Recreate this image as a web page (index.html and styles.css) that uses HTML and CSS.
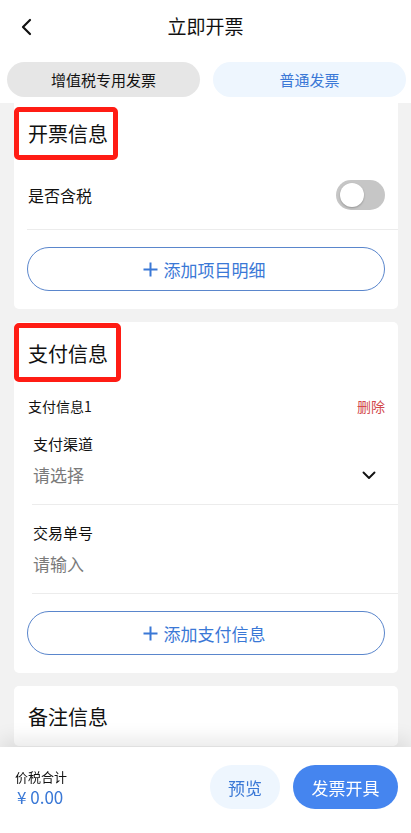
FILE: index.html
```html
<!DOCTYPE html>
<html lang="zh-CN">
<head>
<meta charset="utf-8">
<meta name="viewport" content="width=device-width, initial-scale=1">
<title>立即开票</title>
<link rel="stylesheet" href="styles.css">
</head>
<body>
<div class="page">
  <header class="topbar">
    <span class="back">
      <svg width="14" height="18" viewBox="0 0 14 18"><polyline points="10,2 3,9 10,16" fill="none" stroke="#111" stroke-width="2.2" stroke-linecap="round" stroke-linejoin="round"/></svg>
    </span>
    <h1 class="title">立即开票</h1>
  </header>
  <div class="tabs">
    <div class="tab tab-grey">增值税专用发票</div>
    <div class="tab tab-blue">普通发票</div>
  </div>

  <main class="content">
    <section class="card card-first">
      <div class="mark mark-1"><h2 class="card-title">开票信息</h2></div>
      <div class="switch-row">
        <span class="switch-label">是否含税</span>
        <span class="toggle"><span class="knob"></span></span>
      </div>
      <div class="add-btn">
        <svg class="plus" width="15" height="15" viewBox="0 0 15 15"><path d="M7.5 0.5v14M0.5 7.5h14" stroke="#3a78d6" stroke-width="2" fill="none"/></svg>
        <span>添加项目明细</span>
      </div>
    </section>

    <section class="card">
      <div class="mark mark-2"><h2 class="card-title">支付信息</h2></div>
      <div class="pay-head">
        <span class="pay-name">支付信息1</span>
        <span class="delete">删除</span>
      </div>
      <div class="field">
        <div class="field-label">支付渠道</div>
        <div class="field-value">
          <span>请选择</span>
          <svg class="chev" width="14" height="9" viewBox="0 0 14 9"><polyline points="1.5,1.5 7,7 12.5,1.5" fill="none" stroke="#111" stroke-width="1.9" stroke-linecap="round" stroke-linejoin="round"/></svg>
        </div>
      </div>
      <div class="field">
        <div class="field-label">交易单号</div>
        <div class="field-value"><span>请输入</span></div>
      </div>
      <div class="add-btn">
        <svg class="plus" width="15" height="15" viewBox="0 0 15 15"><path d="M7.5 0.5v14M0.5 7.5h14" stroke="#3a78d6" stroke-width="2" fill="none"/></svg>
        <span>添加支付信息</span>
      </div>
    </section>

    <section class="card card-last">
      <h2 class="card-title plain">备注信息</h2>
    </section>
  </main>

  <footer class="bottombar">
    <div class="total">
      <div class="total-label">价税合计</div>
      <div class="total-value">¥ 0.00</div>
    </div>
    <div class="actions">
      <button class="btn btn-light">预览</button>
      <button class="btn btn-primary">发票开具</button>
    </div>
  </footer>
</div>
</body>
</html>
```
FILE: styles.css
```css
* { box-sizing: border-box; }
html, body { margin: 0; padding: 0; }
body {
  font-family: "Noto Sans CJK SC", "Noto Sans", sans-serif;
  color: #111;
  background: #f2f2f2;
}
.page { width: 411px; }

.topbar {
  height: 52px;
  background: #fff;
  display: flex;
  align-items: center;
  justify-content: center;
  position: relative;
}
.back {
  position: absolute;
  left: 20px;
  top: 18px;
  display: flex;
}
.title {
  margin: 0;
  font-size: 19px;
  font-weight: 400;
  line-height: 26px;
}

.tabs {
  background: #fff;
  padding: 10px 5px 6px 7px;
  display: grid;
  grid-template-columns: 1fr 1fr;
  gap: 13px;
}
.tab {
  height: 35px;
  border-radius: 18px;
  display: flex;
  align-items: center;
  justify-content: center;
  font-size: 15px;
}
.tab-grey { background: #e6e6e6; color: #111; }
.tab-blue { background: #eef6fe; color: #3a78d6; }

.content {
  padding: 0 13px 86px 14px;
  display: flex;
  flex-direction: column;
  gap: 13px;
}
.card {
  background: #fff;
  border-radius: 5px;
  padding-bottom: 18px;
}
.card-first {
  border-radius: 0 0 5px 5px;
  padding-top: 4px;
}

.mark {
  border: 5px solid #ff1c14;
  border-radius: 5px;
  display: inline-block;
  padding-left: 9px;
}
.mark-1 { width: 104px; height: 53px; }
.mark-2 { width: 107px; height: 59px; padding-top: 3px; margin-top: 1px; }
.card-title {
  margin: 0;
  font-size: 20px;
  font-weight: 400;
  line-height: 43px;
}
.mark-2 .card-title { line-height: 45px; }

.switch-row {
  height: 70px;
  margin-left: 13px;
  padding-right: 13px;
  border-bottom: 1px solid #ececec;
  display: flex;
  align-items: center;
  justify-content: space-between;
}
.switch-label { font-size: 16px; padding-left: 1px; }
.toggle {
  width: 49px;
  height: 30px;
  border-radius: 15px;
  background: #c6c6c6;
  position: relative;
}
.knob {
  position: absolute;
  left: 4px;
  top: 3px;
  width: 24px;
  height: 24px;
  border-radius: 50%;
  background: #fff;
  box-shadow: 0 1px 2px rgba(0,0,0,0.25);
}

.add-btn {
  margin: 17px 13px 0 13px;
  height: 44px;
  border: 1px solid #5a86cc;
  border-radius: 22px;
  display: flex;
  align-items: center;
  justify-content: center;
  gap: 6px;
  color: #3a78d6;
  font-size: 17px;
  padding-right: 4px;
}

.pay-head {
  display: flex;
  justify-content: space-between;
  padding: 14px 13px 0 14px;
  font-size: 14px;
  line-height: 20px;
}
.delete { color: #d2484c; }

.field {
  margin-left: 18px;
  padding: 17px 0 15px 1px;
  border-bottom: 1px solid #ececec;
}
.field-label { font-size: 15px; line-height: 22px; }
.field-value {
  margin-top: 4px;
  height: 30px;
  display: flex;
  align-items: center;
  justify-content: space-between;
  font-size: 17px;
  color: #7a7a7a;
  padding-right: 22px;
}
.chev { margin-top: 2px; }

.card-last { height: 60px; padding: 18px 14px 0 14px; }
.card-title.plain { line-height: 26px; }

.bottombar {
  position: fixed;
  left: 0;
  right: 0;
  bottom: 0;
  height: 86px;
  background: #fff;
  box-shadow: 0 -8px 18px rgba(0,0,0,0.09);
  display: flex;
  justify-content: space-between;
  align-items: flex-start;
  padding: 18px 13px 0 15px;
}
.total { padding-top: 3px; }
.total-label { font-size: 13px; line-height: 18px; }
.total-value { font-size: 17px; color: #3a78d6; line-height: 22px; padding-left: 2px; }
.actions { display: flex; gap: 13px; }
.btn {
  height: 44px;
  border: none;
  border-radius: 22px;
  font-family: inherit;
  font-size: 17px;
  padding: 0;
}
.btn-light { width: 70px; background: #eef6fe; color: #3a78d6; }
.btn-primary { width: 105px; background: #4585ef; color: #fff; }
```
